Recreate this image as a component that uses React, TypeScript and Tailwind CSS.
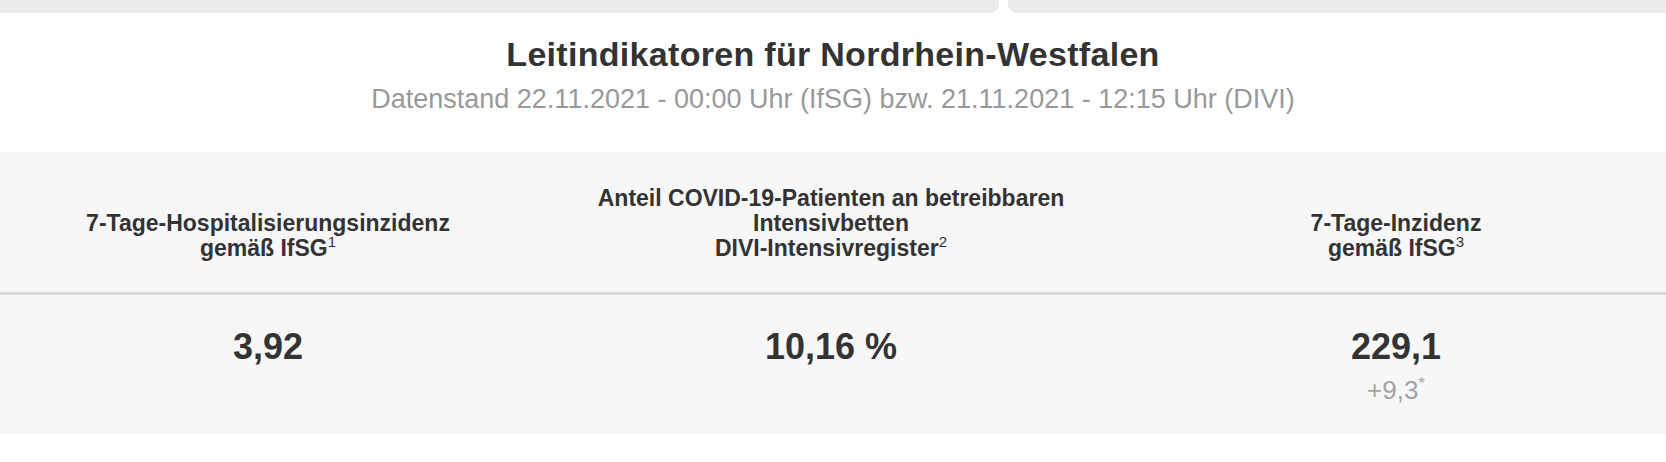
export default function App() {
  return (
    <div className="w-[1666px] h-[462px] bg-white text-[#333] font-['Liberation_Sans',Arial,sans-serif] overflow-hidden">
      {/* Cards above, only their lower edges show */}
      <div className="flex gap-[9px] h-[13px]">
        <div className="w-[999px] bg-[#ececec] rounded-br-[9px]" />
        <div className="flex-1 bg-[#ececec] rounded-bl-[9px]" />
      </div>

      <div className="pt-[21px] text-center">
        <h2 className="text-[34px] leading-[40px] font-bold tracking-[0.3px]">Leitindikatoren für Nordrhein-Westfalen</h2>
        <p className="mt-[10px] text-[27px] leading-[30px] text-[#999]">
          Datenstand 22.11.2021 - 00:00 Uhr (IfSG) bzw. 21.11.2021 - 12:15 Uhr (DIVI)
        </p>
      </div>

      <div className="mt-[38px] bg-[#f7f7f7]">
        <div className="grid grid-cols-[536px_590px_1fr] h-[143px] border-b-[3px] border-[#dadada] text-[23px] leading-[25px] font-bold text-center">
          <HeadCell lines={["7-Tage-Hospitalisierungsinzidenz"]} last="gemäß IfSG" note="1" />
          <HeadCell lines={["Anteil COVID-19-Patienten an betreibbaren", "Intensivbetten"]} last="DIVI-Intensivregister" note="2" />
          <HeadCell lines={["7-Tage-Inzidenz"]} last="gemäß IfSG" note="3" />
        </div>
        <div className="grid grid-cols-[536px_590px_1fr] h-[139px] text-center">
          <ValueCell value="3,92" />
          <ValueCell value="10,16 %" />
          <ValueCell value="229,1" change="+9,3" />
        </div>
      </div>
    </div>
  );
}

function HeadCell({ lines, last, note }: { lines: string[]; last: string; note: string }) {
  return (
    <div className="flex flex-col justify-end pb-[31px]">
      {lines.map((l) => (
        <div key={l}>{l}</div>
      ))}
      <div>
        {last}
        <sup className="text-[15px] font-normal relative top-[-9px]">{note}</sup>
      </div>
    </div>
  );
}

function ValueCell({ value, change }: { value: string; change?: string }) {
  return (
    <div className="pt-[30px]">
      <div className="text-[36px] leading-[44px] font-bold">{value}</div>
      {change && (
        <div className="mt-[7px] text-[26px] leading-[28px] text-[#a3a3a3]">
          {change}
          <sup className="text-[17px] relative top-[-10px]">*</sup>
        </div>
      )}
    </div>
  );
}
